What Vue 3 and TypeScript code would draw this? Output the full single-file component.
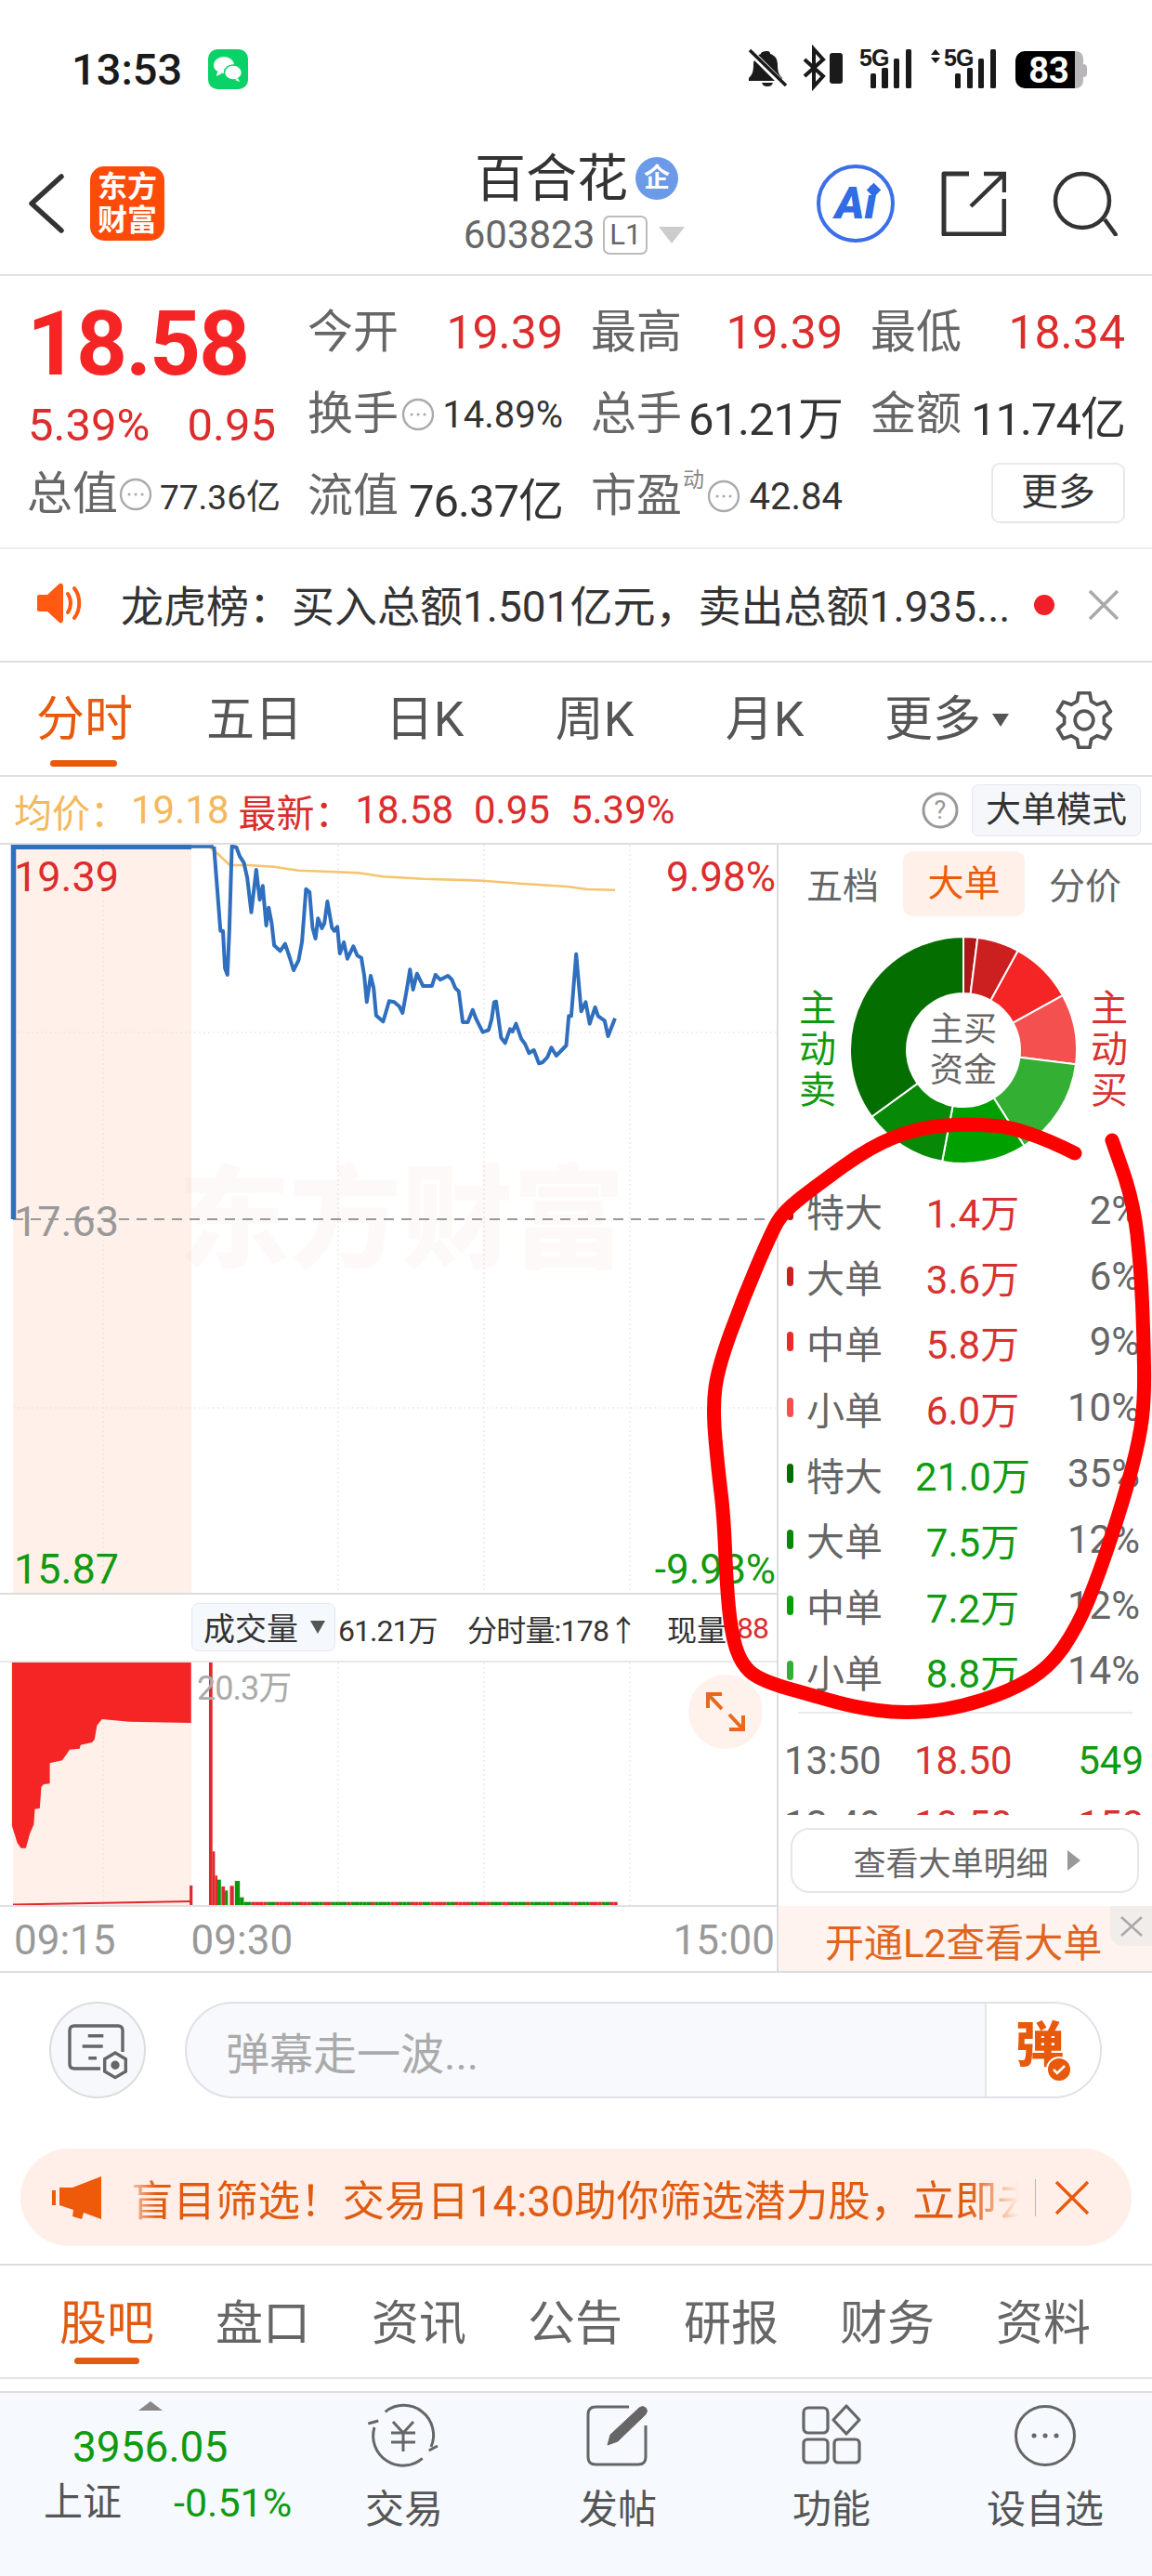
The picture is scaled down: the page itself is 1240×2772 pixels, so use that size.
<script setup lang="ts">
type P = [number, number]
const priceRaw: P[] = [[430,33],[437,180],[443,305],[448,305],[452,425],[457,447],[461,300],[466,32],[475,35],[482,65],[490,85],[497,135],[505,245],[515,108],[522,205],[528,160],[535,288],[540,230],[546,280],[551,352],[563,370],[573,347],[582,390],[590,432],[600,400],[607,340],[615,170],[622,180],[628,295],[634,330],[639,265],[647,297],[652,280],[658,210],[667,295],[672,305],[678,292],[683,378],[691,342],[698,395],[710,355],[718,385],[726,392],[732,450],[737,535],[745,450],[751,490],[756,578],[770,598],[782,532],[792,535],[802,548],[809,570],[818,490],[824,430],[830,495],[838,443],[850,483],[868,483],[875,447],[885,463],[900,450],[908,462],[915,490],[922,500],[930,600],[940,600],[950,560],[957,590],[970,632],[982,625],[988,590],[993,535],[997,533],[1007,650],[1015,667],[1025,622],[1030,630],[1037,605],[1048,655],[1055,670],[1063,700],[1073,690],[1083,733],[1090,730],[1100,713],[1108,682],[1118,708],[1138,675],[1143,580],[1148,580],[1158,380],[1168,565],[1177,535],[1185,605],[1196,552],[1202,580],[1215,595],[1222,645],[1236,587]]
const avgRaw: P[] = [[420,33],[440,60],[462,93],[500,93],[550,98],[600,110],[650,113],[720,118],[770,130],[850,137],[970,143],[1050,153],[1140,162],[1180,171],[1236,173]]
const volEdge: P[] = [[24,264],[24,795],[35,850],[42,866],[52,866],[60,820],[68,790],[70,740],[80,738],[83,668],[88,660],[100,658],[100,592],[125,583],[135,560],[140,548],[160,545],[162,533],[185,525],[190,515],[195,470],[205,450],[260,458],[384,462],[384,264]]
const mapPts = (raw: P[], oy: number) =>
  raw.map(([x, y]) => `${(x / 1.867).toFixed(1)},${(y / 3 + oy).toFixed(1)}`).join(' ')
const pricePts = mapPts(priceRaw, 900)
const avgPts = mapPts(avgRaw, 900)
const volPts = mapPts(volEdge, 1700)

const volBars: { x: number; y: number; w: number; c: string }[] = []
const RED = '#E0282E'
const GRN = '#0A960A'
const big: [number, number, number, string][] = [[381, 387, 987, RED], [420, 427, 267, RED], [427, 432, 877, RED], [432, 437, 955, RED], [437, 444, 968, GRN], [445, 452, 990, RED], [452, 458, 1003, GRN], [462, 470, 988, RED], [472, 482, 972, GRN], [482, 490, 1025, GRN], [490, 505, 1040, GRN]]
big.forEach(([a, b, y, c]) => volBars.push({ x: a / 1.867, w: (b - a) / 1.867, y: y / 3 + 1700, c }))
for (let i = 0, x = 505; x < 1238; i++, x += 8) {
  const c = (i * 7 + (i % 5) * 3) % 9 < 4 ? RED : GRN
  volBars.push({ x: x / 1.867, w: 4.3, y: 1040 / 3 + 1700, c })
}

const slices: [number, string][] = [[2, '#B01818'], [6, '#CC1F1F'], [9, '#F52525'], [10, '#F55050'], [14, '#33B033'], [12, '#00A000'], [12, '#078807'], [35, '#056E00']]
let acc = 0
const donut = slices.map(([v, color]) => {
  const a0 = (acc / 100) * Math.PI * 2
  acc += v
  const a1 = (acc / 100) * Math.PI * 2
  const pt = (r: number, a: number) => `${(r * Math.sin(a)).toFixed(2)} ${(-r * Math.cos(a)).toFixed(2)}`
  const large = v > 50 ? 1 : 0
  return { color, d: `M${pt(122, a0)} A122 122 0 ${large} 1 ${pt(122, a1)} L${pt(61, a1)} A61 61 0 ${large} 0 ${pt(61, a0)} Z` }
})

const orders = [
  { n: '特大', v: '1.4万', p: '2%', dot: '#B01818', c: 'red' },
  { n: '大单', v: '3.6万', p: '6%', dot: '#CC1F1F', c: 'red' },
  { n: '中单', v: '5.8万', p: '9%', dot: '#F02828', c: 'red' },
  { n: '小单', v: '6.0万', p: '10%', dot: '#F55050', c: 'red' },
  { n: '特大', v: '21.0万', p: '35%', dot: '#056E00', c: 'green' },
  { n: '大单', v: '7.5万', p: '12%', dot: '#078807', c: 'green' },
  { n: '中单', v: '7.2万', p: '12%', dot: '#00A000', c: 'green' },
  { n: '小单', v: '8.8万', p: '14%', dot: '#33B033', c: 'green' }
]

const topTabs = ['分时', '五日', '日K', '周K', '月K']
const subTabs = ['股吧', '盘口', '资讯', '公告', '研报', '财务', '资料']

const gear = (() => {
  const out: string[] = []
  for (let i = 0; i < 6; i++) {
    const c = (i * Math.PI) / 3
    const steps: [number, number][] = [[21, -0.36], [29, -0.2], [29, 0.2], [21, 0.36]]
    steps.forEach(([r, d]) => out.push(`${(30 + r * Math.sin(c + d)).toFixed(1)},${(30 - r * Math.cos(c + d)).toFixed(1)}`))
  }
  return out.join(' ')
})()

const loop: P[] = [[1157,1241],[1103,1214],[1040,1209],[987,1214],[937,1234],[880,1275],[843,1304],[830,1327],[800,1397],[773,1471],[767,1515],[773,1582],[779,1630],[782,1704],[787,1756],[797,1789],[817,1808],[880,1826],[920,1837],[970,1844],[1027,1839],[1087,1820],[1130,1794],[1160,1750],[1183,1694],[1210,1612],[1227,1547],[1232,1503],[1231,1440],[1228,1364],[1220,1293],[1197,1227]]
const loopPath = (() => {
  let d = `M${loop[0][0]} ${loop[0][1]}`
  for (let i = 1; i < loop.length - 1; i++) {
    const mx = (loop[i][0] + loop[i + 1][0]) / 2
    const my = (loop[i][1] + loop[i + 1][1]) / 2
    d += ` Q${loop[i][0]} ${loop[i][1]} ${mx} ${my}`
  }
  const l = loop[loop.length - 1]
  return `${d} L${l[0]} ${l[1]}`
})()
</script>

<template>
  <div class="page">
    <div class="status">
      <span class="clock">13:53</span>
      <svg class="wechat" viewBox="0 0 43 43" width="43" height="43">
        <rect width="43" height="43" rx="10" fill="#0BD267" />
        <ellipse cx="17" cy="17" rx="11" ry="9" fill="#fff" />
        <path d="M10 24l-1 5 6-3z" fill="#fff" />
        <ellipse cx="27" cy="25" rx="9.5" ry="8" fill="#fff" stroke="#0BD267" stroke-width="1.5" />
        <path d="M32 31l2 4-5-2z" fill="#fff" />
      </svg>
      <div class="sys">
        <svg width="366" height="80" viewBox="805 35 366 80">
          <path d="M826 55c2 0 3 1 3 3 6 2 8 6 8 12 0 8 2 11 5 14v3h-36v-3c3-3 5-6 5-14 0-6 3-10 8-12 0-2 3-3 7-3z" fill="#1a1a1a" />
          <path d="M820 89h12c-1 3-3 4-6 4s-5-1-6-4z" fill="#1a1a1a" />
          <path d="M807 55l38 38" stroke="#fff" stroke-width="7" />
          <path d="M807 54l39 38" stroke="#1a1a1a" stroke-width="3.5" />
          <path d="M866 64l20 18-10 11V53l10 11-20 18" fill="none" stroke="#1a1a1a" stroke-width="4" />
          <rect x="893" y="57" width="14" height="33" rx="3" fill="#1a1a1a" />
          <text x="925" y="71" class="fiveg">5G</text>
          <rect x="937" y="79" width="6" height="16" rx="1.5" fill="#1a1a1a" />
          <rect x="949" y="73" width="7" height="22" rx="1.5" fill="#1a1a1a" />
          <rect x="962" y="63" width="6" height="32" rx="1.5" fill="#1a1a1a" />
          <rect x="975" y="53" width="6" height="42" rx="1.5" fill="#1a1a1a" />
          <path d="M1007 53l5 6h-10zM1007 68l5-6h-10z" fill="#1a1a1a" />
          <text x="1016" y="71" class="fiveg">5G</text>
          <rect x="1028" y="79" width="6" height="16" rx="1.5" fill="#1a1a1a" />
          <rect x="1041" y="73" width="6" height="22" rx="1.5" fill="#1a1a1a" />
          <rect x="1053" y="63" width="6" height="32" rx="1.5" fill="#1a1a1a" />
          <rect x="1066" y="53" width="6" height="42" rx="1.5" fill="#1a1a1a" />
          <path d="M1150 55h8a8 8 0 0 1 8 8v24a8 8 0 0 1-8 8h-8z" fill="#B8B6B9" />
          <path d="M1166 69a4 4 0 0 1 4 4v6a4 4 0 0 1-4 4z" fill="#B8B6B9" />
          <path d="M1103 55h54v40h-54a10 10 0 0 1-10-10V65a10 10 0 0 1 10-10z" fill="#000" />
          <text x="1129" y="89" class="batt">83</text>
        </svg>
      </div>
    </div>

    <header class="head">
      <div class="head-left">
        <svg width="38" height="64" viewBox="0 0 38 64"><path d="M35 3L3 32l32 29" fill="none" stroke="#333" stroke-width="5.5" stroke-linecap="round" stroke-linejoin="round" /></svg>
        <div class="logo"><span>东方</span><span>财富</span></div>
      </div>
      <div class="head-mid">
        <div class="title"><span>百合花</span><i class="qi">企</i></div>
        <div class="code">
          <span>603823</span><b class="l1">L1</b><i class="tri"></i>
        </div>
      </div>
      <div class="head-right">
        <div class="ai"><span>Ai</span><i></i></div>
        <svg width="70" height="70" viewBox="0 0 70 70"><path d="M30 3H3v65h65V30" fill="none" stroke="#333" stroke-width="5" stroke-linejoin="round" /><path d="M32 38L66 5M46 3h22v20" fill="none" stroke="#333" stroke-width="4.5" /></svg>
        <svg width="70" height="70" viewBox="0 0 70 70"><circle cx="32" cy="32" r="29" fill="none" stroke="#333" stroke-width="4.5" /><path d="M56 52l13 18" stroke="#333" stroke-width="4.5" /></svg>
      </div>
    </header>

    <section class="quote">
      <div class="q-left">
        <div class="big">18.58</div>
        <div class="chg"><span>5.39%</span><span>0.95</span></div>
        <div class="q-total">
          <span class="lab">总值</span>
          <svg class="more-i" width="36" height="36" viewBox="0 0 36 36"><circle cx="18" cy="18" r="16" /><path d="M11 18h.1M18 18h.1M25 18h.1" /></svg>
          <span class="small st">77.36亿</span>
        </div>
      </div>
      <div class="q-grid">
        <div class="cell"><span class="lab">今开</span><span class="up">19.39</span></div>
        <div class="cell"><span class="lab">最高</span><span class="up">19.39</span></div>
        <div class="cell"><span class="lab">最低</span><span class="up">18.34</span></div>
        <div class="cell">
          <span class="lab">换手</span>
          <svg class="more-i" width="36" height="36" viewBox="0 0 36 36"><circle cx="18" cy="18" r="16" /><path d="M11 18h.1M18 18h.1M25 18h.1" /></svg>
          <span class="small push">14.89%</span>
        </div>
        <div class="cell"><span class="lab">总手</span><span class="val">61.21万</span></div>
        <div class="cell"><span class="lab">金额</span><span class="val">11.74亿</span></div>
        <div class="cell"><span class="lab">流值</span><span class="val">76.37亿</span></div>
        <div class="cell">
          <span class="lab">市盈</span><sup class="dong">动</sup>
          <svg class="more-i" width="36" height="36" viewBox="0 0 36 36"><circle cx="18" cy="18" r="16" /><path d="M11 18h.1M18 18h.1M25 18h.1" /></svg>
          <span class="small m12">42.84</span>
        </div>
        <div class="cell end"><span class="more-btn">更多</span></div>
      </div>
    </section>

    <section class="notice">
      <svg width="52" height="44" viewBox="0 0 52 44">
        <path d="M2 13h9L24 1c2-1 4 0 4 3v36c0 3-2 4-4 3L11 31H2a2 2 0 0 1-2-2V15a2 2 0 0 1 2-2z" fill="#FF5A10" />
        <path d="M33 12c4 6 4 14 0 20M40 6c7 9 7 23 0 32" fill="none" stroke="#FF5A10" stroke-width="4" stroke-linecap="round" />
      </svg>
      <span class="n-text">龙虎榜：买入总额1.501亿元，卖出总额1.935...</span>
      <i class="n-dot"></i>
      <svg class="n-x" width="34" height="34" viewBox="0 0 34 34"><path d="M2 2l30 30M32 2L2 32" stroke="#aaa" stroke-width="3.5" /></svg>
    </section>

    <nav class="tabs">
      <div v-for="(t, i) in topTabs" :key="t" class="tab" :class="{ on: i === 0 }">{{ t }}</div>
      <div class="tab more">更多<i></i></div>
      <svg class="gear" width="62" height="62" viewBox="0 0 60 60">
        <polygon :points="gear" fill="none" stroke="#555" stroke-width="3.6" stroke-linejoin="round" />
        <circle cx="30" cy="30" r="9.5" fill="none" stroke="#555" stroke-width="3.6" />
      </svg>
    </nav>

    <div class="info">
      <span class="yl w114">均价：</span><span class="yl num m11">19.18</span>
      <span class="rd w114 m14">最新：</span><span class="rd num m11">18.58</span>
      <span class="rd num m24">0.95</span><span class="rd num m24">5.39%</span>
      <svg class="help" width="40" height="40" viewBox="0 0 40 40"><circle cx="20" cy="20" r="18" fill="none" stroke="#999" stroke-width="3" /><text x="20" y="29" class="q">?</text></svg>
      <span class="mode">大单模式</span>
    </div>

    <main class="main">
      <div class="charts">
        <div class="price">
          <svg class="fill" viewBox="0 909 837 805" width="837" height="805">
            <rect x="14" y="909" width="192" height="805" fill="#FFF0EA" />
            <g stroke="#E4E4E4" stroke-width="1.2" stroke-dasharray="2 3">
              <path d="M111 909V1714M364 909V1714M521 909V1714M678 909V1714" />
              <path d="M14 1111H836M14 1515H836" />
            </g>
            <path d="M14 1312H836" stroke="#999" stroke-width="2.2" stroke-dasharray="11 8" />
            <polyline :points="avgPts" fill="none" stroke="#F5C46E" stroke-width="2.6" />
            <path d="M12 911H206" stroke="#2F6FBE" stroke-width="6" />
            <path d="M206 911H230" stroke="#2F6FBE" stroke-width="3.5" />
            <path d="M14.5 909V1312" stroke="#2F6FBE" stroke-width="5.5" />
            <polyline :points="pricePts" fill="none" stroke="#2F6FBE" stroke-width="4" stroke-linejoin="round" />
          </svg>
          <div class="wm">东方财富</div>
          <span class="p-lab tl up">19.39</span>
          <span class="p-lab tr up">9.98%</span>
          <span class="p-lab ml gr">17.63</span>
          <span class="p-lab bl dn">15.87</span>
          <span class="p-lab br dn">-9.98%</span>
        </div>
        <div class="vol-head">
          <span class="vbtn">成交量<i></i></span>
          <span class="w-t">61.21万</span>
          <span class="w-f">分时量:178↑</span>
          <span class="w-n">现量</span>
          <span class="w-r">88</span>
        </div>
        <div class="vol">
          <svg class="fill" viewBox="0 1789 837 261" width="837" height="261">
            <rect x="14" y="1789" width="192" height="261" fill="#FFF0EA" />
            <g stroke="#E4E4E4" stroke-width="1.2" stroke-dasharray="2 3">
              <path d="M111 1789V2050M364 1789V2050M521 1789V2050M678 1789V2050" />
            </g>
            <polygon :points="volPts" fill="#F52525" />
            <path d="M14 2049.5L206 2046" stroke="#E0282E" stroke-width="2" />
            <rect v-for="(b, i) in volBars" :key="i" :x="b.x" :y="b.y" :width="b.w" :height="2050.5 - b.y" :fill="b.c" />
          </svg>
          <span class="v-max">20.3万</span>
          <span class="expand">
            <svg width="44" height="44" viewBox="0 0 44 44"><path d="M3 18V3h15M3 3l15 16M41 26v15H26M41 41L26 25" fill="none" stroke="#E8681E" stroke-width="4" /></svg>
          </span>
        </div>
        <div class="axis"><span>09:15</span><span class="t2">09:30</span><span class="t3">15:00</span></div>
      </div>

      <aside class="side">
        <div class="s-tabs"><span>五档</span><span class="on">大单</span><span>分价</span></div>
        <div class="donut-row">
          <span class="vert green">主动卖</span>
          <div class="donut">
            <svg width="244" height="244" viewBox="-122 -122 244 244">
              <path v-for="s in donut" :key="s.color" :d="s.d" :fill="s.color" stroke="#fff" stroke-width="2" />
            </svg>
            <div class="d-text">主买<br />资金</div>
          </div>
          <span class="vert red">主动买</span>
        </div>
        <div class="orders">
          <div v-for="(o, i) in orders" :key="i" class="order">
            <i class="odot" :style="{ background: o.dot }"></i>
            <span class="o-n">{{ o.n }}</span>
            <span class="o-v" :class="o.c">{{ o.v }}</span>
            <span class="o-p">{{ o.p }}</span>
          </div>
        </div>
        <div class="rule"></div>
        <div class="trades">
          <div class="trade"><span>13:50</span><span class="red">18.50</span><span class="green">549</span></div>
          <div class="trade"><span>13:49</span><span class="red">18.50</span><span class="red">158</span></div>
        </div>
        <div class="detail">查看大单明细<i></i></div>
        <div class="l2">
          开通L2查看大单
          <span class="l2-x"><svg width="26" height="26" viewBox="0 0 26 26"><path d="M2 3l22 20M24 3L2 23" stroke="#aaa" stroke-width="2.6" /></svg></span>
        </div>
      </aside>
    </main>

    <div class="composer">
      <div class="c-circle">
        <svg width="70" height="60" viewBox="0 0 70 60" fill="none" stroke="#666" stroke-width="3.4">
          <path d="M62 30V7q0-5-5-5H10q-5 0-5 5v36q0 5 5 5h28" />
          <path d="M24.700 12.700h16.600M18.700 24h22M25.300 36.700H34" />
          <polygon points="54,31 65.300,37.700 65.300,51 54,57.600 42.700,51 42.700,37.700" />
          <circle cx="54" cy="44.300" r="3" fill="#666" />
        </svg>
      </div>
      <div class="c-input">
        <span class="ph">弹幕走一波...</span>
        <span class="c-send">
          <b>弹</b>
          <svg class="c-ok" width="30" height="30" viewBox="0 0 30 30"><circle cx="15" cy="15" r="13" fill="#E8590C" stroke="#fff" stroke-width="2" /><path d="M9 15l4 4 8-8" fill="none" stroke="#fff" stroke-width="2.500" /></svg>
        </span>
      </div>
    </div>

    <div class="promo">
      <svg width="56" height="48" viewBox="0 0 56 48">
        <path d="M1 16h4v16H1z" fill="#EE5A0A" />
        <path d="M9 13h14L54 1v46L35 40l-2 7-10-3 1-7-15-5z" fill="#EE5A0A" />
      </svg>
      <div class="p-clip"><span>盲目筛选！交易日14:30助你筛选潜力股，立即去看看吧</span></div>
      <i class="p-bar"></i>
      <svg width="38" height="36" viewBox="0 0 38 36"><path d="M2 1l34 34M36 1L2 35" stroke="#E8590C" stroke-width="3.400" /></svg>
    </div>

    <nav class="sub">
      <div v-for="(t, i) in subTabs" :key="t" class="stab" :class="{ on: i === 0 }">{{ t }}</div>
    </nav>

    <footer class="foot">
      <div class="idx">
        <i class="idx-tri"></i>
        <div class="idx-v">3956.05</div>
        <div class="idx-r"><span>上证</span><b>-0.51%</b></div>
      </div>
      <div class="f-item">
        <svg width="84" height="70" viewBox="0 0 84 70" fill="none" stroke="#666" stroke-width="3">
          <path d="M21.700 9.300A32 32 0 0 1 71 47M68.700 51l9.300-5M61.700 59.300A32 32 0 0 1 10 26M3.300 22l11-3" />
          <path d="M30 20l11 12 11-12M28 32h26M28 42h26M41 32v20" />
        </svg>
        <span>交易</span>
      </div>
      <div class="f-item">
        <svg width="72" height="70" viewBox="0 0 72 70" fill="none" stroke="#666" stroke-width="3">
          <path d="M48 4H12q-8 0-8 8v46q0 8 8 8h46q8 0 8-8V24" />
          <path d="M25 45l3-11L59 5q4-3 7 0t0 7L36 41z" fill="#666" stroke-width="1" />
        </svg>
        <span>发帖</span>
      </div>
      <div class="f-item">
        <svg width="70" height="70" viewBox="0 0 70 70" fill="none" stroke="#666" stroke-width="3.200">
          <rect x="5" y="5" width="26" height="27" rx="5" />
          <path d="M51 3l14 15-14 15-14-15z" stroke-linejoin="round" />
          <rect x="5" y="39" width="26" height="25" rx="4" />
          <rect x="38" y="39" width="27" height="25" rx="4" />
        </svg>
        <span>功能</span>
      </div>
      <div class="f-item">
        <svg width="70" height="70" viewBox="0 0 70 70" fill="none" stroke="#666" stroke-width="3">
          <circle cx="35" cy="35" r="31.500" />
          <path d="M23 35h.1M35 35h.1M47 35h.1" stroke-width="5" stroke-linecap="round" />
        </svg>
        <span>设自选</span>
      </div>
    </footer>

    <svg class="ink" width="1240" height="2772" viewBox="0 0 1240 2772">
      <path :d="loopPath" fill="none" stroke="#FF0000" stroke-width="15" stroke-linecap="round" stroke-linejoin="round" />
    </svg>
  </div>
</template>

<style scoped>
.page, .page * { box-sizing: border-box; }
.page {
  position: relative;
  width: 1240px;
  height: 2772px;
  overflow: hidden;
  background: #fff;
  display: flex;
  flex-direction: column;
  font-family: Roboto, "Noto Sans CJK SC", sans-serif;
  color: #333;
}
i { font-style: normal; display: block; }

.status { height: 150px; display: flex; align-items: center; padding-left: 77px; }
.clock { font-size: 47px; font-weight: 500; color: #1a1a1a; width: 147px; margin-top: -2px; }
.wechat { display: block; margin-top: -2px; }
.sys { margin-left: auto; margin-right: 69px; display: flex; }
.fiveg { font: 700 25px "Liberation Sans", sans-serif; fill: #1a1a1a; letter-spacing: -1px; }
.batt { font: 700 38px Roboto, sans-serif; fill: #fff; text-anchor: middle; }

.head { height: 147px; border-bottom: 2px solid #E2E2E2; display: grid; grid-template-columns: 1fr auto 1fr; align-items: center; padding-bottom: 8px; }
.head-left { display: flex; align-items: center; padding-left: 31px; gap: 28px; }
.logo { width: 80px; height: 80px; background: #FF4B0A; border-radius: 15px; color: #fff; display: flex; flex-direction: column; align-items: center; justify-content: center; font-size: 32px; line-height: 36px; font-weight: 700; }
.head-mid { display: flex; flex-direction: column; align-items: center; margin-left: -4px; }
.title { display: flex; align-items: center; font-size: 55px; line-height: 64px; color: #333; padding-left: 5px; }
.qi { width: 46px; height: 46px; border-radius: 50%; background: #6C9AE8; color: #fff; font-size: 28px; font-weight: 700; line-height: 46px; text-align: center; margin-left: 8px; }
.code { display: flex; align-items: center; margin-top: 4px; font-size: 42px; line-height: 50px; color: #666; }
.l1 { font-weight: 400; font-size: 31px; line-height: 38px; width: 48px; height: 42px; border: 2px solid #bbb; border-radius: 7px; text-align: center; margin-left: 9px; }
.tri { margin-left: 12px; width: 0; height: 0; border-left: 14px solid transparent; border-right: 14px solid transparent; border-top: 18px solid #CCC; }
.head-right { display: flex; align-items: center; justify-content: flex-end; gap: 50px; padding-right: 37px; }
.head-right svg { display: block; }
.ai { position: relative; width: 84px; height: 84px; border: 4px solid #3B6FE8; border-radius: 50%; display: flex; align-items: center; justify-content: center; color: #2F6CE5; font-size: 48px; font-weight: 900; font-style: italic; }
.ai i { position: absolute; left: 52px; top: 18px; width: 11px; height: 11px; background: #2F6CE5; transform: rotate(45deg); }

.quote { height: 294px; border-bottom: 2px solid #EEE; display: flex; padding-top: 17px; }
.q-left { width: 331px; padding-left: 29px; }
.big { font-size: 96px; line-height: 96px; font-weight: 700; color: #F52525; letter-spacing: -2px; margin-top: 8px; }
.chg { display: flex; gap: 40px; font-size: 49px; line-height: 50px; color: #DC2C2C; margin-top: 15px; padding-left: 1px; }
.q-total { display: flex; align-items: center; margin-top: 24px; height: 50px; }
.lab { font-size: 49px; color: #666; line-height: 50px; white-space: nowrap; }
.q-grid { width: 881px; display: grid; grid-template-columns: 275px 271px 274px; column-gap: 30px; grid-auto-rows: 88px; }
.cell { display: flex; align-items: center; justify-content: space-between; }
.cell.end { justify-content: flex-end; align-items: flex-start; padding-top: 8px; }
.up { font-size: 50px; color: #DC2C2C; }
.val { font-size: 49px; color: #333; white-space: nowrap; letter-spacing: -1px; }
.small { font-size: 40px; color: #333; white-space: nowrap; }
.small.st { font-size: 37px; margin-left: 8px; }
.push { margin-left: 7px; }
.m12 { margin-left: 10px; }
.more-i { fill: none; stroke: #aaa; stroke-width: 2.400; flex: none; margin-left: 1px; display: block; }
.more-i path { stroke-width: 3; stroke-linecap: round; }
.cell:nth-child(8) { justify-content: flex-start; }
.dong { font-size: 23px; color: #888; line-height: 1; width: 26px; margin-top: -36px; margin-left: 1px; vertical-align: baseline; }
.more-btn { width: 144px; height: 65px; border: 2px solid #E8E8E8; border-radius: 9px; text-align: center; font-size: 40px; line-height: 60px; color: #333; }

.notice { height: 122px; border-bottom: 2px solid #DDD; display: flex; align-items: center; padding: 0 0 4px 40px; }
.n-text { margin-left: 38px; font-size: 46px; color: #333; width: 983px; white-space: nowrap; overflow: hidden; }
.n-dot { width: 22px; height: 22px; border-radius: 50%; background: #F0202A; flex: none; margin-top: 4px; }
.n-x { margin-left: 36px; flex: none; margin-top: 4px; }

.tabs { height: 123px; border-bottom: 2px solid #DDD; display: grid; grid-template-columns: repeat(6, 183px) 1fr; align-items: center; padding-top: 3px; }
.tab { position: relative; text-align: center; font-size: 52px; color: #555; line-height: 60px; white-space: nowrap; margin-left: -1px; }
.tab.on { color: #E8590C; }
.tab.on::after { content: ""; position: absolute; left: 55px; width: 72px; height: 7px; top: 73px; border-radius: 4px; background: #E8590C; }
.tab.more { display: flex; justify-content: center; align-items: center; padding-left: 26px; }
.tab.more i { margin-left: 12px; border-left: 9px solid transparent; border-right: 9px solid transparent; border-top: 14px solid #555; }
.gear { margin-left: 38px; display: block; }

.info { height: 71px; display: flex; align-items: center; padding-left: 15px; font-size: 41px; white-space: nowrap; }
.yl { color: #F5B85A; }
.rd { color: #DC2C2C; }
.w114 { width: 114px; }
.num { font-size: 42px; }
.m11 { margin-left: 12px; }
.m14 { margin-left: 10px; }
.m24 { margin-left: 22px; }
.help { margin-left: auto; display: block; }
.q { font: 400 27px Roboto, sans-serif; fill: #999; text-anchor: middle; }
.mode { width: 182px; height: 56px; margin: 0 12px 0 14px; background: #F5F7FA; border: 1px solid #E4E8EE; border-radius: 7px; text-align: center; line-height: 52px; font-size: 38px; color: #333; }

.main { height: 1216px; border-top: 2px solid #DDD; border-bottom: 2px solid #DDD; display: flex; }
.charts { width: 838px; border-right: 2px solid #DDD; display: flex; flex-direction: column; flex: none; }
.price { position: relative; height: 807px; border-bottom: 2px solid #DDD; overflow: hidden; }
.fill { position: absolute; left: 0; top: 0; display: block; }
.wm { position: absolute; left: 192px; top: 340px; font-size: 120px; line-height: 130px; font-weight: 900; color: rgba(200, 120, 120, 0.045); white-space: nowrap; }
.p-lab { position: absolute; font-size: 45px; line-height: 50px; white-space: nowrap; }
.tl { left: 15px; top: 10px; }
.tr { right: 1px; top: 10px; font-size: 44px; }
.ml { left: 15px; top: 381px; color: #999; }
.bl { left: 15px; top: 755px; }
.br { right: 1px; top: 755px; font-size: 44px; }
.gr { color: #999; }
.p-lab.up { color: #DC2C2C; }
.dn { color: #0F9A0F; }

.vol-head { height: 73px; border-bottom: 2px solid #E8E8E8; display: flex; align-items: center; padding-left: 206px; font-size: 32px; color: #333; white-space: nowrap; }
.vbtn { width: 155px; height: 52px; background: #F5F8FC; border: 1px solid #E4E8EE; border-radius: 7px; display: flex; align-items: center; padding-left: 12px; font-size: 34px; margin-top: -2px; }
.vbtn i { margin-left: 13px; border-left: 8px solid transparent; border-right: 8px solid transparent; border-top: 14px solid #555; }
.w-t { margin-left: 3px; width: 139px; letter-spacing: -1px; }
.w-f { width: 215px; letter-spacing: -.8px; }
.w-n { width: 75px; }
.w-r { color: #DC2C2C; font-size: 32px; letter-spacing: -1px; }

.vol { position: relative; height: 263px; border-bottom: 2px solid #E0E0E0; }
.v-max { position: absolute; left: 212px; top: 6px; color: #aaa; font-size: 36px; line-height: 44px; letter-spacing: -1px; }
.expand { position: absolute; left: 741px; top: 13px; width: 80px; height: 80px; border-radius: 50%; background: #FFF2EC; display: flex; align-items: center; justify-content: center; }
.axis { position: relative; flex: 1; font-size: 44px; color: #999; display: flex; padding: 11px 0 0 15px; line-height: 50px; }
.t2 { margin-left: 81px; }
.t3 { margin-left: auto; margin-right: 2px; }

.side { flex: 1; min-width: 0; display: flex; flex-direction: column; }
.s-tabs { height: 81px; padding: 7px 0 4px 4px; display: grid; grid-template-columns: 131px 130px 131px; font-size: 39px; color: #666; text-align: center; line-height: 76px; }
.s-tabs span { display: block; height: 70px; margin-left: -1px; }
.s-tabs .on { background: #FFF0E9; color: #EC5D0B; border-radius: 10px; line-height: 70px; }
.donut-row { height: 280px; display: flex; align-items: center; padding-left: 20px; gap: 17px; }
.vert { writing-mode: vertical-rl; text-orientation: upright; font-size: 40px; line-height: 40px; letter-spacing: 4px; width: 40px; flex: none; margin-left: -2px; }
.donut { position: relative; width: 244px; height: 244px; flex: none; margin-left: 2px; margin-right: -4px; }
.donut svg { display: block; }
.d-text { position: absolute; inset: 0; display: flex; align-items: center; justify-content: center; text-align: center; font-size: 36px; line-height: 44px; color: #666; }
.red { color: #D8322F; }
.green { color: #0F9A0F; }
.orders { display: grid; grid-auto-rows: 70.8px; height: 566px; margin-top: -3px; }
.order { display: flex; align-items: center; padding: 0 13px 0 9px; font-size: 41px; white-space: nowrap; }
.odot { width: 7px; height: 21px; border-radius: 4px; flex: none; }
.o-n { margin-left: 14px; width: 82px; color: #666; flex: none; }
.o-v { width: 194px; text-align: center; flex: none; font-size: 42px; }
.o-p { margin-left: auto; color: #666; flex: none; font-size: 42px; }
.rule { height: 2px; margin: 9px 21px 0 21px; background: #EAEAEA; flex: none; }
.trades { height: 109px; overflow: hidden; padding-top: 16px; flex: none; }
.trade { height: 69px; display: grid; grid-template-columns: 140px 1fr auto; align-items: center; padding: 0 9px 0 6px; font-size: 42px; color: #666; }
.detail { margin: 14px 14px 0 13px; height: 70px; border: 2px solid #E6E6E6; border-radius: 20px; display: flex; align-items: center; justify-content: center; font-size: 35px; color: #666; flex: none; padding-left: 4px; }
.detail i { margin-left: 20px; border-top: 11px solid transparent; border-bottom: 11px solid transparent; border-left: 14px solid #999; }
.l2 { position: relative; margin-top: 14px; flex: 1; background: #FEF3EE; color: #E0641E; font-size: 42px; display: flex; align-items: center; padding: 2px 0 0 50px; white-space: nowrap; }
.l2-x { position: absolute; right: 0; top: 0; width: 45px; height: 43px; background: #F1EDEA; border-bottom-left-radius: 14px; display: flex; align-items: center; justify-content: center; }

.composer { height: 189px; padding: 31px 0 0 53px; display: flex; gap: 42px; flex: none; align-items: flex-start; }
.c-circle { width: 104px; height: 104px; border-radius: 50%; background: #F6F8FC; border: 2px solid #DDD; display: flex; align-items: center; justify-content: center; flex: none; padding-top: 4px; }
.c-input { width: 987px; height: 104px; border: 2px solid #DDE1E8; border-radius: 52px; background: #F7F9FD; display: flex; align-items: center; overflow: hidden; }
.ph { flex: 1; padding-left: 42px; font-size: 47px; color: #AAA; }
.c-send { position: relative; width: 124px; height: 100%; background: #fff; border-left: 2px solid #E2E5EA; display: flex; padding: 18px 0 0 31px; }
.c-send b { font-size: 52px; line-height: 56px; color: #E8590C; font-weight: 900; }
.c-ok { position: absolute; left: 63px; top: 56px; }

.promo { height: 105px; margin: 0 22px; border-radius: 53px; background: #FFEFE8; display: flex; align-items: center; padding-left: 33px; flex: none; }
.p-clip { margin-left: 21px; width: 965px; overflow: hidden; white-space: nowrap; font-size: 45.500px; color: #E05A10; padding-left: 9px; -webkit-mask-image: linear-gradient(90deg, transparent 0, #000 36px, #000 910px, transparent 965px); mask-image: linear-gradient(90deg, transparent 0, #000 36px, #000 910px, transparent 965px); }
.p-bar { width: 1px; height: 40px; background: #E8A57E; margin: 0 20px 0 17px; flex: none; }

.sub { margin-top: 19px; height: 124px; border-top: 2px solid #DDD; border-bottom: 2px solid #E4E4E4; display: grid; grid-template-columns: repeat(7, 168px); padding: 5px 0 0 31px; align-items: center; flex: none; }
.stab { position: relative; text-align: center; font-size: 51px; color: #666; line-height: 60px; }
.stab.on { color: #E05A10; }
.stab.on::after { content: ""; position: absolute; left: 49px; top: 66px; width: 70px; height: 7px; border-radius: 4px; background: #E05A10; }

.foot { margin-top: 13px; flex: 1; background: #F6F9FE; border-top: 2px solid #DDD; display: grid; grid-template-columns: 320px repeat(4, 230px); }
.idx { display: flex; flex-direction: column; align-items: stretch; padding: 9px 0 0 47px; width: 320px; }
.idx-tri { align-self: flex-start; margin-left: 102px; border-left: 13px solid transparent; border-right: 13px solid transparent; border-bottom: 10px solid #888; width: 0; }
.idx-v { font-size: 46px; line-height: 50px; color: #0F9A0F; margin: 14px 0 0 31px; }
.idx-r { display: flex; align-items: center; gap: 56px; margin-top: 12px; font-size: 42px; line-height: 46px; color: #555; }
.idx-r b { font-weight: 400; color: #0F9A0F; font-size: 43px; }
.f-item { display: flex; flex-direction: column; align-items: center; padding-top: 11px; font-size: 42px; color: #555; }
.f-item svg { display: block; }
.f-item span { margin-top: 22px; line-height: 46px; }

.ink { position: absolute; left: 0; top: 0; pointer-events: none; }
</style>
